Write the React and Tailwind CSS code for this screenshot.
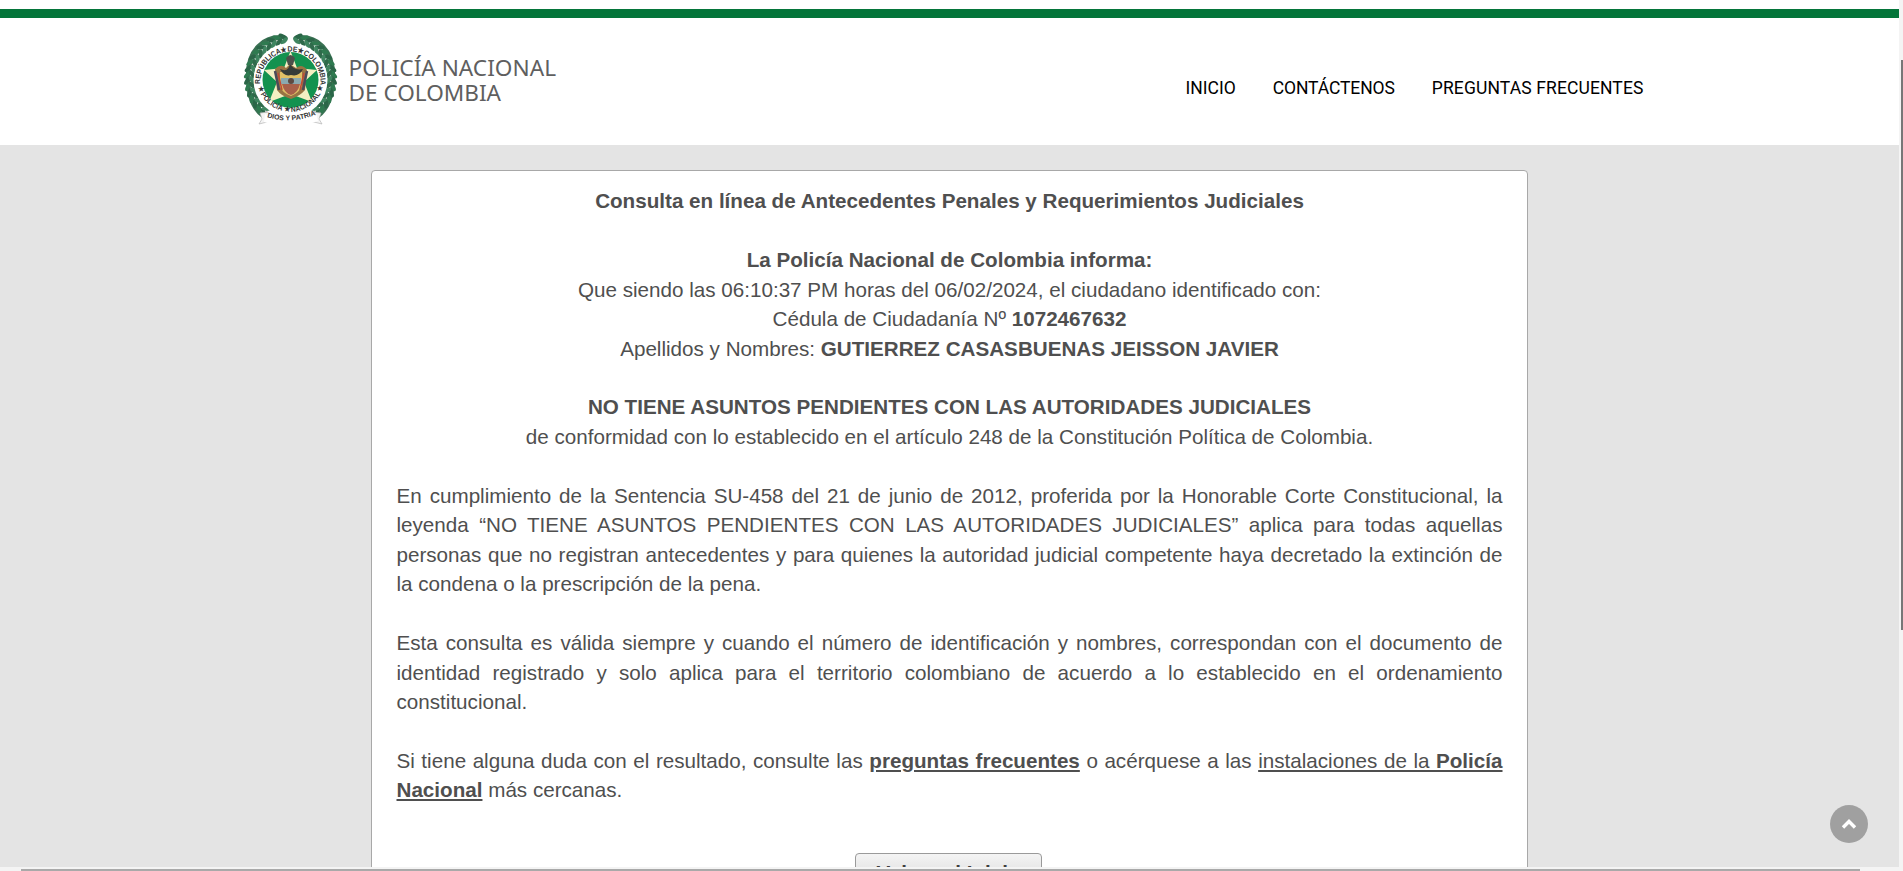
const leaves = Array.from({ length: 17 }, (_, i) => 24 + i * 8.2);

function Wreath() {
  return (
    <g>
      {[1, -1].map((side) => (
        <g key={side} transform={`translate(60.5 59) scale(${side * 1.04} 1.04)`}>
          <path d="M6 -40 C26 -42 41 -28 41 -3 C41 18 34 30 26 36" fill="none" stroke="#3a7153" strokeWidth="4" />
          {leaves.map((a, i) => (
            <g key={a} transform={`rotate(${a - 12}) translate(0 -39.5)`}>
              <ellipse cx="0" cy="-2.4" rx="4.8" ry="2" transform="rotate(-38)" fill={i % 2 ? "#2f7a50" : "#2b6648"} />
              <ellipse cx="0" cy="3" rx="4.4" ry="2" transform="rotate(34)" fill={i % 2 ? "#2f6a4b" : "#3f8560"} />
              {i % 3 === 1 && <circle cx="1" cy="0" r="1" fill="#8a5a4a" />}
            </g>
          ))}
        </g>
      ))}
    </g>
  );
}

function Crest() {
  return (
    <svg className="h-[115px] w-[120px] shrink-0" viewBox="0 0 120 115">
      <defs>
        <path id="arcTop" d="M30.6 64 A30 30 0 1 1 90.4 64" />
        <path id="arcBottom" d="M27.5 66 A34 34 0 0 0 93.500 66" />
        <path id="motto" d="M36 97 Q61 105 88 94" />
      </defs>
      <Wreath />
      <path d="M30 93 L38 92 L41 101 L29 104 L32 99 Z M91 93 L83 92 L80 101 L92 104 L89 99 Z" fill="#f4f4f4" stroke="#b5b5b5" strokeWidth=".7" />
      <circle cx="60.5" cy="60" r="37" fill="#fff" />
      <circle cx="60.5" cy="60" r="28" fill="#13924f" />
      <path d="M60.5 31 L67 48 L87 50 L74 62 L82 82 L60.5 74 L39 82 L47 62 L34 50 L54 48 Z" fill="#f3efc2" />
      <path d="M45 49 Q51 43 56 48 L60 44 L66 48 Q72 43 77 50 L75 70 Q70 76 61 79 Q51 76 47 70 Z" fill="#987443" />
      <path d="M50 52 H72 V66 Q69 73 61 76 Q52 73 50 66 Z" fill="#e0c066" />
      <path d="M51 58 H71 V64 H51 Z" fill="#8ba9b0" />
      <path d="M52 64 H70 Q68 73 61 75 Q54 73 52 64 Z" fill="#a8604a" />
      <path d="M50 49 Q59 53 60 43 Q63 51 73 49 Q69 57 61 55 Q54 57 50 49 Z" fill="#353b38" />
      <path d="M45 51 L49 70 M77 51 L73 70" stroke="#4c4a59" strokeWidth="2.5" />
      <path d="M48 53 L52 70 M74 53 L70 70" stroke="#bd4b38" strokeWidth="1.5" />
      <circle cx="61" cy="61" r="3" fill="#5d4a42" />
      <path d="M56 38 Q60.500 32 65 38 L63 45 H58 Z" fill="#4c504a" />
      <path d="M35 94 Q60 104 86 93 L88 101 Q61 110 34 102 Z" fill="#fff" />
      <g fill="#333" fontFamily="Liberation Sans, sans-serif" fontWeight="700">
        <text fontSize="7.6"><textPath href="#arcTop" textLength="100" lengthAdjust="spacingAndGlyphs">REPÚBLICA★DE★COLOMBIA</textPath></text>
        <text fontSize="7.2"><textPath href="#arcBottom" startOffset="1" textLength="88" lengthAdjust="spacingAndGlyphs">★ POLICÍA ★ NACIONAL ★</textPath></text>
        <text fontSize="7"><textPath href="#motto" startOffset="1" textLength="50" lengthAdjust="spacingAndGlyphs">DIOS Y PATRIA</textPath></text>
      </g>
    </svg>
  );
}

function Header() {
  return (
    <header className="flex h-[136px] shrink-0 border-t-[9px] border-[#04753a] bg-white">
      <div className="flex pl-[230px] pt-[2px]">
        <Crest />
        <svg className="-ml-[6px] h-[115px] w-[230px]" viewBox="0 0 230 115" fill="#5f5f5f" fontFamily="Noto Sans, sans-serif" fontSize="21.5">
          <text x="4.5" y="56" textLength="207.5" lengthAdjust="spacingAndGlyphs">POLICÍA NACIONAL</text>
          <text x="4.500" y="81" textLength="152.500" lengthAdjust="spacingAndGlyphs">DE COLOMBIA</text>
        </svg>
      </div>
      <nav className="ml-auto mr-[255.500px] flex gap-[37px] pt-[58px] font-[Roboto,sans-serif] text-[17.500px] leading-[24px] text-black">
        <a>INICIO</a>
        <a className="tracking-[-0.1px]">CONTÁCTENOS</a>
        <a className="tracking-[0.12px]">PREGUNTAS FRECUENTES</a>
      </nav>
    </header>
  );
}

function Result() {
  return (
    <main className="ml-[371px] mt-[25px] h-[780px] w-[1157px] rounded-[4px] border border-[#a8a8a8] bg-white px-[24.5px] pt-[15.3px] text-[20.64px] leading-[29.46px] text-[#4f4f4f]">
      <div className="text-center">
        <p className="mb-[29.46px]"><b>Consulta en línea de Antecedentes Penales y Requerimientos Judiciales</b></p>
        <p><b>La Policía Nacional de Colombia informa:</b></p>
        <p>Que siendo las 06:10:37 PM horas del 06/02/2024, el ciudadano identificado con:</p>
        <p>Cédula de Ciudadanía Nº <b>1072467632</b></p>
        <p className="mb-[29.46px]">Apellidos y Nombres: <b>GUTIERREZ CASASBUENAS JEISSON JAVIER</b></p>
        <p><b>NO TIENE ASUNTOS PENDIENTES CON LAS AUTORIDADES JUDICIALES</b></p>
        <p>de conformidad con lo establecido en el artículo 248 de la Constitución Política de Colombia.</p>
      </div>
      <div className="mt-[29.46px] flex flex-col gap-[29.46px] text-justify">
        <p>En cumplimiento de la Sentencia SU-458 del 21 de junio de 2012, proferida por la Honorable Corte Constitucional, la leyenda “NO TIENE ASUNTOS PENDIENTES CON LAS AUTORIDADES JUDICIALES” aplica para todas aquellas personas que no registran antecedentes y para quienes la autoridad judicial competente haya decretado la extinción de la condena o la prescripción de la pena.</p>
        <p>Esta consulta es válida siempre y cuando el número de identificación y nombres, correspondan con el documento de identidad registrado y solo aplica para el territorio colombiano de acuerdo a lo establecido en el ordenamiento constitucional.</p>
        <p>Si tiene alguna duda con el resultado, consulte las <b className="underline">preguntas frecuentes</b> o acérquese a las <a className="underline">instalaciones de la <b>Policía Nacional</b></a> más cercanas.</p>
      </div>
      <button className="mt-[48px] ml-[458.5px] block h-[40px] w-[187px] rounded-[4px] border border-[#9a9a9a] bg-linear-to-b from-[#f4f4f4] to-[#d4d4d4] text-[20.64px] leading-[32px] font-bold text-[#3f3f3f]">Volver al Inicio</button>
    </main>
  );
}

export default function App() {
  return (
    <div className="relative h-[871px] w-[1903px] overflow-hidden bg-[#f4f4f4] font-['Liberation_Sans',Arial,sans-serif]">
      <div className="flex h-[867px] w-[1899px] flex-col overflow-hidden bg-[#e4e4e4]">
        <div className="h-[9px] shrink-0 bg-white" />
        <Header />
        <Result />
      </div>
      <div className="absolute top-[60px] right-0 h-[570px] w-[2px] bg-[#777]" />
      <div className="absolute bottom-0 left-[21px] h-[2px] w-[1839px] bg-[#a9a9a9]" />
      <button className="absolute top-[805px] left-[1830px] flex size-[38px] items-center justify-center rounded-full bg-[#a0a0a0]">
        <svg className="h-[12px] w-[16px]" viewBox="0 0 16 12" fill="none" stroke="#fff" strokeWidth="3.4">
          <path d="M2 9.500 L8 3.500 L14 9.500" />
        </svg>
      </button>
    </div>
  );
}
